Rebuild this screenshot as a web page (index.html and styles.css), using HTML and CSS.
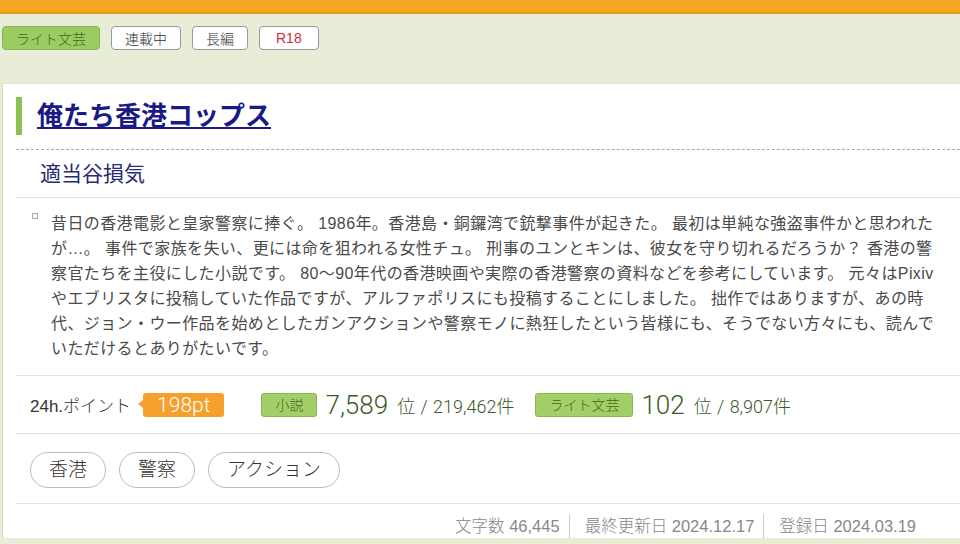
FILE: index.html
```html
<!DOCTYPE html>
<html lang="ja">
<head>
    <meta charset="UTF-8">
    <meta name="viewport" content="width=device-width, initial-scale=1.0">
    <title>俺たち香港コップス</title>
    <link rel="stylesheet" href="styles.css">
</head>
<body>
    <div class="topbar"></div>
    <div class="genres">
        <span class="label label-green">ライト文芸</span>
        <span class="label">連載中</span>
        <span class="label">長編</span>
        <span class="label label-red">R18</span>
    </div>
    <div class="card">
        <div class="card-head">
            <h1 class="title"><a href="#">俺たち香港コップス</a></h1>
        </div>
        <div class="author">適当谷損気</div>
        <div class="summary">
            <span class="bullet"></span>
            <p>昔日の香港電影と皇家警察に捧ぐ。 1986年。香港島・銅鑼湾で銃撃事件が起きた。 最初は単純な強盗事件かと思われたが…。 事件で家族を失い、更には命を狙われる女性チュ。 刑事のユンとキンは、彼女を守り切れるだろうか？ 香港の警察官たちを主役にした小説です。 80～90年代の香港映画や実際の香港警察の資料などを参考にしています。 元々はPixivやエブリスタに投稿していた作品ですが、アルファポリスにも投稿することにしました。 拙作ではありますが、あの時代、ジョン・ウー作品を始めとしたガンアクションや警察モノに熱狂したという皆様にも、そうでない方々にも、読んでいただけるとありがたいです。</p>
        </div>
        <div class="ranking">
            <span class="point-label">24h.ポイント</span>
            <span class="point">198pt</span>
            <span class="rank rank-first">
                <span class="rank-tag">小説</span>
                <span class="rank-num">7,589</span>
                <span class="rank-total">位 / 219,462件</span>
            </span>
            <span class="rank">
                <span class="rank-tag">ライト文芸</span>
                <span class="rank-num">102</span>
                <span class="rank-total">位 / 8,907件</span>
            </span>
        </div>
        <div class="tags">
            <a class="tag" href="#">香港</a>
            <a class="tag" href="#">警察</a>
            <a class="tag" href="#">アクション</a>
        </div>
        <div class="info">
            <span class="info-item">文字数 46,445</span>
            <span class="info-item">最終更新日 2024.12.17</span>
            <span class="info-item">登録日 2024.03.19</span>
        </div>
    </div>
</body>
</html>
```

FILE: styles.css
```css
body {
    margin: 0;
    background-color: #e8edd8;
    font-family: "Liberation Sans", "Noto Sans CJK JP", sans-serif;
    color: #333;
    overflow: hidden;
}
.topbar {
    height: 12px;
    background-color: #f5a623;
    border-bottom: 2px solid #e39a1f;
}
.genres {
    display: flex;
    gap: 11px;
    padding: 12px 2px 33px;
}
.label {
    display: inline-flex;
    align-items: center;
    justify-content: center;
    height: 22px;
    padding: 0 13px;
    font-size: 14px;
    font-weight: 300;
    background-color: #fff;
    border: 1px solid #999;
    border-radius: 4px;
    color: #333;
}
.label-green {
    background-color: #9dcb63;
    border-color: #86b451;
    color: #3a6b18;
}
.label-red {
    color: #d22a3a;
    padding: 0 16px;
}
.card {
    background-color: #fff;
    margin-left: 2px;
    border-left: 1px solid #d6deba;
    border-top: 1px solid #dfe5cc;
    padding-left: 13px;
}
.card-head {
    padding: 13px 0 14px;
    border-bottom: 1px dashed #aaa;
}
.title {
    margin: 0;
    border-left: 6px solid #8cc152;
    padding-left: 15px;
    line-height: 38px;
    font-size: 26px;
    font-weight: bold;
}
.title a {
    color: #1a1a86;
}
.author {
    height: 47px;
    line-height: 47px;
    padding-left: 24px;
    font-size: 21px;
    color: #2a2a70;
    border-bottom: 1px solid #e2e2e2;
}
.summary {
    display: flex;
    padding: 13px 15px 14px 14px;
    border-bottom: 1px solid #e2e2e2;
}
.bullet {
    flex: none;
    width: 4px;
    height: 4px;
    border: 1px solid #aaa;
    margin: 2px 13px 0 2px;
}
.summary p {
    margin: 0;
    font-size: 16px;
    letter-spacing: 0.4px;
    line-height: 25px;
    color: #4a4a4a;
}
.ranking {
    display: flex;
    align-items: center;
    height: 57px;
    padding-left: 14px;
    border-bottom: 1px solid #e2e2e2;
}
.point-label {
    font-size: 17px;
    font-weight: 300;
    color: #333;
}
.point {
    position: relative;
    margin-left: 12px;
    height: 24px;
    line-height: 24px;
    padding: 0 14px;
    background-color: #f5a02c;
    border-radius: 3px;
    color: #fff;
    font-family: Roboto, sans-serif;
    font-weight: 300;
    font-size: 21px;
}
.point::before {
    content: "";
    position: absolute;
    left: -5px;
    top: 7px;
    border-top: 4px solid transparent;
    border-bottom: 4px solid transparent;
    border-right: 5px solid #f5a02c;
}
.rank {
    display: flex;
    align-items: center;
    margin-left: 21px;
    color: #3a5a2a;
}
.rank-first {
    margin-left: 37px;
}
.rank-tag {
    height: 22px;
    line-height: 22px;
    padding: 0 13px;
    background-color: #a3cf69;
    border: 1px solid #88b653;
    border-radius: 3px;
    font-size: 14px;
    font-weight: 300;
    color: #3c6a1a;
}
.rank-num {
    margin-left: 8px;
    font-family: Roboto, sans-serif;
    font-weight: 300;
    font-size: 26px;
}
.rank-total {
    margin-left: 9px;
    font-family: Roboto, "Noto Sans CJK JP", sans-serif;
    font-size: 18px;
    font-weight: 300;
    word-spacing: 1px;
}
.tags {
    display: flex;
    gap: 13px;
    padding: 18px 0 15px 14px;
    border-bottom: 1px solid #e2e2e2;
}
.tag {
    height: 34px;
    line-height: 34px;
    padding: 0 18px;
    border: 1px solid #bbb;
    border-radius: 18px;
    font-size: 19px;
    font-weight: 300;
    color: #333;
    text-decoration: none;
}
.info {
    display: flex;
    justify-content: flex-end;
    padding: 10px 44px 0 0;
    font-size: 16.5px;
    font-weight: 300;
    color: #888;
}
.info-item {
    padding: 0 9px 0 15px;
    border-left: 1px solid #ccc;
    line-height: 24px;
}
.info-item:first-child {
    border-left: none;
}
.info-item:last-child {
    padding-right: 0;
}
```
